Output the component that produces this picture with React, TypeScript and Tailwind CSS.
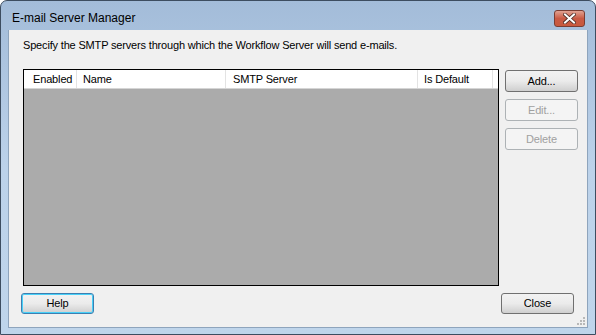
import React from 'react'

const font = { fontFamily: '"Liberation Sans", Arial, sans-serif' }

function Btn({ label, disabled, focused, h = 'h-[22px]' }: { label: string; disabled?: boolean; focused?: boolean; h?: string }) {
  return (
    <button
      className={`w-[73px] ${h} rounded-[3px] text-[11px] tracking-[-0.15px] flex items-center justify-center ${
        disabled
          ? 'border border-[#adb2b5] bg-[#f4f4f4] text-[#a0a0a0]'
          : focused
            ? 'border border-[#3c7fb1] shadow-[inset_0_0_0_1px_#48d0f8] bg-gradient-to-b from-[#f2f2f2] via-[#ebebeb] to-[#cfcfcf] text-black'
            : 'border border-[#707070] bg-gradient-to-b from-[#f2f2f2] via-[#ebebeb] to-[#cfcfcf] text-black'
      }`}
    >
      {label}
    </button>
  )
}

function Grip() {
  return (
    <svg width="8" height="8" viewBox="0 0 8 8" className="self-end mb-[2px] -mr-[6px]">
      {[
        [6, 0], [3, 3], [6, 3], [0, 6], [3, 6], [6, 6],
      ].map(([x, y]) => (
        <rect key={`${x}-${y}`} x={x} y={y} width="2" height="2" fill="#b8b8b8" />
      ))}
    </svg>
  )
}

export default function App() {
  return (
    <div className="w-[596px] h-[335px] bg-white" style={font}>
      <div className="w-full h-full flex flex-col rounded-t-[7px] border border-[#3d4d60] bg-gradient-to-b from-[#a3bcd9] via-[#bcd2ea] to-[#bfd5eb]">
        {/* title bar */}
        <div className="h-[29px] flex items-start justify-between pl-[11px] pr-[10px]">
          <span className="text-[12px] text-black mt-[9px] leading-[16px]">E-mail Server Manager</span>
          <div className="mt-[9px] w-[31px] h-[17px] rounded-[3px] border border-[#7a3d33] bg-gradient-to-b from-[#e0a293] via-[#c95a45] to-[#c8593d] flex items-center justify-center">
            <svg width="13" height="11" viewBox="0 0 13 11">
              <path d="M2 1.5 L11 9.5 M11 1.5 L2 9.5" stroke="#4a2a24" strokeWidth="3.6" strokeLinecap="square" />
              <path d="M2 1.5 L11 9.5 M11 1.5 L2 9.5" stroke="#ffffff" strokeWidth="2" strokeLinecap="square" />
            </svg>
          </div>
        </div>

        {/* client area */}
        <div className="mx-[7px] mb-[6px] flex-1 bg-[#f0f0f0] border border-[#8ea4bc] border-t-0 flex flex-col pl-[14px] pr-[8px]">
          <p className="text-[11px] leading-[13px] mt-[9px] text-black tracking-[-0.17px]">
            Specify the SMTP servers through which the Workflow Server will send e-mails.
          </p>

          <div className="flex gap-[6px] mt-[17px]">
            <div className="w-[476px] h-[217px] border border-black bg-[#ababab] flex flex-col">
              <div className="h-[19px] bg-white border-b border-[#d5d5d5] flex text-[11px] leading-[18px] text-black tracking-[-0.15px]">
                <div className="w-[53px] pl-[9px] border-r border-[#e3e3e3]">Enabled</div>
                <div className="w-[149px] pl-[6px] border-r border-[#e3e3e3]">Name</div>
                <div className="w-[192px] pl-[7px] border-r border-[#e3e3e3]">SMTP Server</div>
                <div className="w-[75px] pl-[6px] border-r border-[#e3e3e3]">Is Default</div>
              </div>
            </div>
            <div className="flex flex-col gap-[7px] pt-[1px]">
              <Btn label="Add..." />
              <Btn label="Edit..." disabled />
              <Btn label="Delete" disabled />
            </div>
          </div>

          <div className="flex justify-between mt-[7px] pr-[5px] -ml-[2px]">
            <Btn label="Help" focused h="h-[21px]" />
            <Btn label="Close" h="h-[21px]" />
          </div>
          <div className="flex-1 flex justify-end">
            <Grip />
          </div>
        </div>
      </div>
    </div>
  )
}
